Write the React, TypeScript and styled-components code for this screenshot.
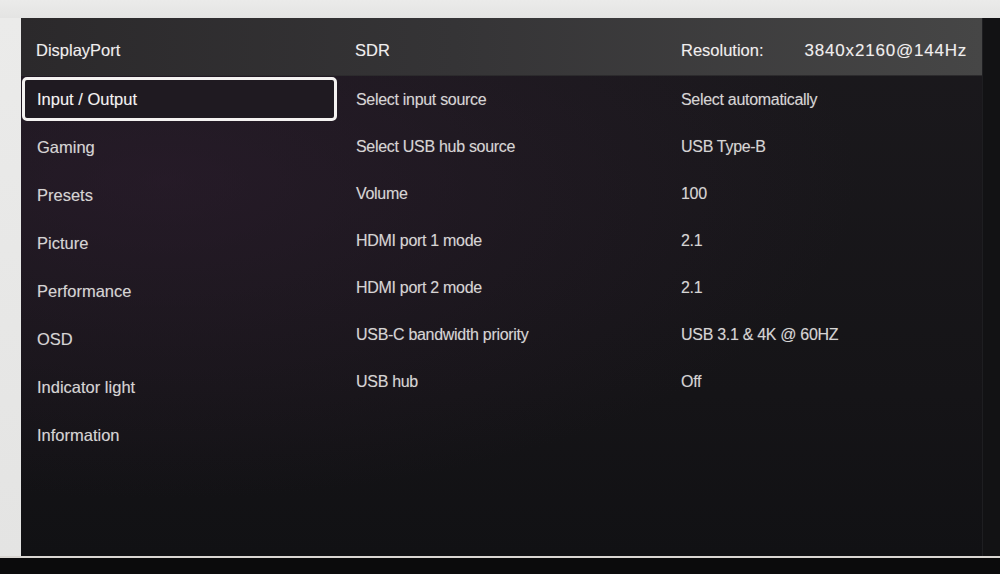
import styled, { createGlobalStyle } from 'styled-components';

const GlobalStyle = createGlobalStyle`
  html, body {
    margin: 0;
    padding: 0;
    background: #e7e7e7;
    overflow: hidden;
  }
`;

const Room = styled.div`
  width: 1000px;
  height: 574px;
  display: grid;
  grid-template-rows: 18px 1fr 16px;
  background: #e8e8e6;
  font-family: 'Liberation Sans', Arial, sans-serif;
`;

const Middle = styled.div`
  display: grid;
  grid-template-columns: 21px 1fr 18px;
  border-bottom: 2px solid #d9d6d2;
`;

const Wall = styled.div`
  background: linear-gradient(180deg, #ebebea, #e4e4e3);
`;

const Bezel = styled.div`
  background: #121214;
  border-left: 1px solid #1e1e21;
`;

const Bottom = styled.div`
  background: #0b0b0c;
`;

const Screen = styled.div`
  display: grid;
  grid-template-rows: 58px 1fr;
  background:
    radial-gradient(ellipse at 15% 30%, rgba(50, 30, 52, 0.5), transparent 60%),
    linear-gradient(180deg, #1b191d 0%, #151417 70%, #111114 100%);
  color: #d9d7d7;
  font-size: 16.5px;
  text-shadow: 0 0 1px rgba(255, 255, 255, 0.25);
`;

const Header = styled.div`
  display: grid;
  grid-template-columns: 316px 325px 1fr;
  align-items: center;
  padding-top: 8px;
  background: linear-gradient(90deg, #2b292b 0%, #353436 45%, #464646 100%);
  color: #f0eeee;
  border-bottom: 1px solid #2c2b2d;
`;

const Cell = styled.div<{ $pad: number }>`
  padding-left: ${(p) => p.$pad}px;
  display: flex;
  gap: 41px;
  white-space: nowrap;
`;

const Resolution = styled.span`
  letter-spacing: 0.8px;
  font-size: 17px;
`;

const Body = styled.div`
  display: grid;
  grid-template-columns: 316px 325px 1fr;
  align-items: start;
`;

const List = styled.div<{ $gap: number; $top: number; $small?: boolean }>`
  display: flex;
  flex-direction: column;
  gap: ${(p) => p.$gap}px;
  padding-top: ${(p) => p.$top}px;
  font-size: ${(p) => (p.$small ? '16px' : '16.5px')};
  letter-spacing: ${(p) => (p.$small ? '-0.3px' : '0')};
`;

const MenuItem = styled.div<{ $active?: boolean; $pad: number }>`
  height: 44px;
  box-sizing: border-box;
  display: flex;
  align-items: center;
  padding-left: ${(p) => p.$pad}px;
  margin-left: 1px;
  border: 3px solid ${(p) => (p.$active ? '#f4f2f1' : 'transparent')};
  border-radius: 5px;
  background: ${(p) => (p.$active ? '#1f1a21' : 'transparent')};
  color: ${(p) => (p.$active ? '#f4f2f2' : '#d6d4d4')};
  white-space: nowrap;
`;

const menu = [
  'Input / Output',
  'Gaming',
  'Presets',
  'Picture',
  'Performance',
  'OSD',
  'Indicator light',
  'Information',
];

const settings = [
  ['Select input source', 'Select automatically'],
  ['Select USB hub source', 'USB Type-B'],
  ['Volume', '100'],
  ['HDMI port 1 mode', '2.1'],
  ['HDMI port 2 mode', '2.1'],
  ['USB-C bandwidth priority', 'USB 3.1 & 4K @ 60HZ'],
  ['USB hub', 'Off'],
];

export default function App() {
  return (
    <>
      <GlobalStyle />
      <Room>
        <Wall />
        <Middle>
          <Wall />
          <Screen>
            <Header>
              <Cell $pad={15}>DisplayPort</Cell>
              <Cell $pad={18}>SDR</Cell>
              <Cell $pad={19}>
                <span>Resolution:</span>
                <Resolution>3840x2160@144Hz</Resolution>
              </Cell>
            </Header>
            <Body>
              <List $gap={4} $top={1}>
                {menu.map((m, i) => (
                  <MenuItem key={m} $active={i === 0} $pad={12}>
                    {m}
                  </MenuItem>
                ))}
              </List>
              <List $gap={3} $top={2} $small>
                {settings.map(([label]) => (
                  <MenuItem key={label} $pad={15}>
                    {label}
                  </MenuItem>
                ))}
              </List>
              <List $gap={3} $top={2} $small>
                {settings.map(([label, value]) => (
                  <MenuItem key={label} $pad={15}>
                    {value}
                  </MenuItem>
                ))}
              </List>
            </Body>
          </Screen>
          <Bezel />
        </Middle>
        <Bottom />
      </Room>
    </>
  );
}
